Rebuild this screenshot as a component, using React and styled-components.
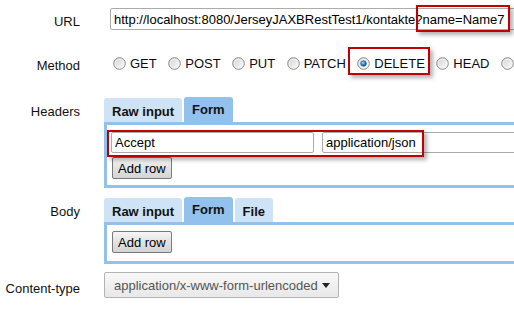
import React from "react";
import styled, { createGlobalStyle } from "styled-components";

const Global = createGlobalStyle`
  html, body { margin: 0; padding: 0; background: #fff; overflow: hidden; }
  body { font-family: "Liberation Sans", Arial, sans-serif; font-size: 13px; color: #000; }
`;

const Page = styled.div`
  position: relative;
  width: 514px;
  height: 319px;
  overflow: hidden;
`;

const Row = styled.div`
  display: grid;
  grid-template-columns: 80px 1fr;
  column-gap: 24px;
  margin-top: ${(p) => p.$mt}px;
  line-height: 15px;
`;

const Label = styled.div`
  text-align: right;
  padding-top: ${(p) => p.$pt}px;
  color: #111;
  white-space: nowrap;
`;

const Field = styled.div`
  min-width: 0;
`;

const TextInput = styled.div`
  box-sizing: border-box;
  height: ${(p) => p.$h || 21}px;
  width: ${(p) => p.$w}px;
  margin-left: ${(p) => p.$ml || 0}px;
  border: 1px solid #ababab;
  border-radius: 2px;
  padding: 0 3px;
  display: flex;
  align-items: center;
  white-space: nowrap;
  overflow: hidden;
  background: #fff;
  color: #000;
  flex: none;
`;

const Radios = styled.div`
  display: flex;
  align-items: center;
  height: 20px;
  white-space: nowrap;
  overflow: hidden;
`;

const RadioItem = styled.label`
  display: flex;
  align-items: center;
  flex: none;
  margin-left: ${(p) => (p.$first ? 9 : 11.5)}px;
  color: #0a0a1e;
`;

const RadioIcon = styled.svg`
  width: 13px;
  height: 13px;
  margin-right: 4px;
  flex: none;
`;

function Radio({ checked }) {
  return (
    <RadioIcon viewBox="0 0 13 13">
      <defs>
        <linearGradient id="rg" x1="0" y1="0" x2="1" y2="1">
          <stop offset="0" stopColor="#d0d0d0" />
          <stop offset="1" stopColor="#ffffff" />
        </linearGradient>
        <radialGradient id="bd" cx="0.4" cy="0.35" r="0.7">
          <stop offset="0" stopColor="#a6e0ff" />
          <stop offset="0.5" stopColor="#2c8fd6" />
          <stop offset="1" stopColor="#0b4b8c" />
        </radialGradient>
      </defs>
      <circle cx="6.5" cy="6.5" r="5.8" fill="url(#rg)" stroke="#8a8a8a" strokeWidth="1" />
      <circle cx="6.5" cy="6.5" r="4.3" fill="none" stroke="#f4f4f4" strokeWidth="0.8" />
      {checked && <circle cx="6.5" cy="6.5" r="2.8" fill="url(#bd)" stroke="#1a4e80" strokeWidth="0.6" />}
    </RadioIcon>
  );
}

const Tabs = styled.div`
  display: flex;
  align-items: flex-end;
  gap: 2px;
  height: 25px;
`;

const Tab = styled.div`
  box-sizing: border-box;
  height: ${(p) => (p.$active ? 25 : 24)}px;
  padding: ${(p) => (p.$active ? "5px 8px 0" : "6px 8px 0")};
  background: ${(p) => (p.$active ? "#93c1ed" : "#cfe3f6")};
  border-radius: 3px 3px 0 0;
  font-weight: bold;
  color: #111;
  white-space: nowrap;
`;

const Panel = styled.div`
  box-sizing: border-box;
  width: 440px;
  border: 3px solid #93c1ed;
  border-right: none;
  padding: ${(p) => p.$pad};
  display: flex;
  flex-direction: column;
  gap: 4px;
  align-items: flex-start;
`;

const PairRow = styled.div`
  display: flex;
  gap: 8px;
`;

const Button = styled.div`
  box-sizing: border-box;
  height: 22px;
  padding: 0 5px;
  margin-left: 1px;
  display: flex;
  align-items: center;
  border: 1px solid #7a7a7a;
  border-radius: 2px;
  background: linear-gradient(#f6f6f6, #e2e2e2 50%, #d4d4d4);
  color: #000;
  white-space: nowrap;
`;

const Select = styled.div`
  box-sizing: border-box;
  width: 235px;
  height: 26px;
  border: 1px solid #b3b3b3;
  border-radius: 2px;
  background: linear-gradient(#f8f8f8, #e8e8e8);
  display: flex;
  align-items: center;
  justify-content: space-between;
  padding: 0 8px 0 9px;
  color: #555;
  white-space: nowrap;
`;

const Caret = styled.span`
  width: 0;
  height: 0;
  border-left: 4.5px solid transparent;
  border-right: 4.5px solid transparent;
  border-top: 5px solid #222;
`;

const Annot = styled.div`
  position: absolute;
  left: ${(p) => p.$x}px;
  top: ${(p) => p.$y}px;
  width: ${(p) => p.$w}px;
  height: ${(p) => p.$h}px;
  box-sizing: border-box;
  border: 2px solid #c00000;
  box-shadow: 3px 3px 4px rgba(0, 0, 0, 0.3);
  pointer-events: none;
`;

const methods = ["GET", "POST", "PUT", "PATCH", "DELETE", "HEAD"];

export default function App() {
  return (
    <Page>
      <Global />
      <Row $mt={8}>
        <Label $pt={6}>URL</Label>
        <Field>
          <TextInput $h={22} $w={430} $ml={6}>
            http://localhost:8080/JerseyJAXBRestTest1/kontakte?name=Name7
          </TextInput>
        </Field>
      </Row>
      <Row $mt={23}>
        <Label $pt={5}>Method</Label>
        <Radios>
          {methods.map((m, i) => (
            <RadioItem key={m} $first={i === 0}>
              <Radio checked={m === "DELETE"} />
              {m}
            </RadioItem>
          ))}
          <RadioItem aria-label="OPTIONS">
            <Radio />
          </RadioItem>
        </Radios>
      </Row>
      <Row $mt={24}>
        <Label $pt={7}>Headers</Label>
        <Field>
          <Tabs>
            <Tab>Raw input</Tab>
            <Tab $active>Form</Tab>
          </Tabs>
          <Panel $pad="7px 4px 6px">
            <PairRow>
              <TextInput $w={203}>Accept</TextInput>
              <TextInput $w={220}>application/json</TextInput>
            </PairRow>
            <Button>Add row</Button>
          </Panel>
        </Field>
      </Row>
      <Row $mt={9}>
        <Label $pt={7}>Body</Label>
        <Field>
          <Tabs>
            <Tab>Raw input</Tab>
            <Tab $active>Form</Tab>
            <Tab>File</Tab>
          </Tabs>
          <Panel $pad="6px 4px 8px">
            <Button>Add row</Button>
          </Panel>
        </Field>
      </Row>
      <Row $mt={8}>
        <Label $pt={9}>Content-type</Label>
        <Field>
          <Select>
            application/x-www-form-urlencoded
            <Caret />
          </Select>
        </Field>
      </Row>
      <Annot $x={416} $y={5} $w={94} $h={27} />
      <Annot $x={348} $y={47} $w={82} $h={28} />
      <Annot $x={107} $y={130} $w={317} $h={27} />
    </Page>
  );
}
